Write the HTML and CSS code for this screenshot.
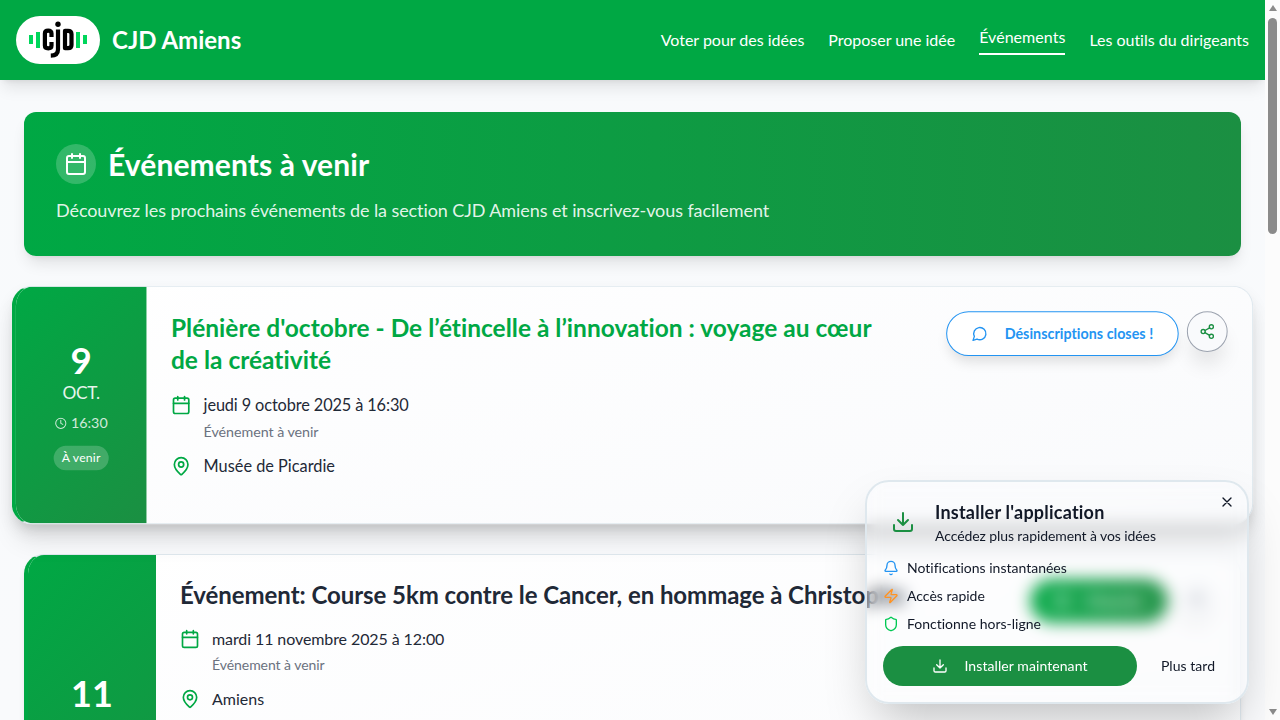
FILE: index.html
```html
<!DOCTYPE html>
<html lang="fr">
<head>
<meta charset="utf-8">
<title>CJD Amiens</title>
<link rel="stylesheet" href="styles.css">
</head>
<body>
<svg class="defs" width="0" height="0" aria-hidden="true">
  <symbol id="calendar" viewBox="0 0 24 24"><path d="M8 2v4M16 2v4M3 10h18"/><rect x="3" y="4" width="18" height="18" rx="2"/></symbol>
  <symbol id="pin" viewBox="0 0 24 24"><path d="M20 10c0 4.993-5.539 10.193-7.399 11.799a1 1 0 0 1-1.202 0C9.539 20.193 4 14.993 4 10a8 8 0 0 1 16 0"/><circle cx="12" cy="10" r="3"/></symbol>
  <symbol id="clock" viewBox="0 0 24 24"><circle cx="12" cy="12" r="10"/><path d="M12 6v6l4 2"/></symbol>
  <symbol id="share" viewBox="0 0 24 24"><circle cx="18" cy="5" r="3"/><circle cx="6" cy="12" r="3"/><circle cx="18" cy="19" r="3"/><path d="M8.59 13.51l6.83 3.98M15.41 6.51l-6.82 3.98"/></symbol>
  <symbol id="message" viewBox="0 0 24 24"><path d="M7.9 20A9 9 0 1 0 4 16.1L2 22Z"/></symbol>
  <symbol id="download" viewBox="0 0 24 24"><path d="M21 15v4a2 2 0 0 1-2 2H5a2 2 0 0 1-2-2v-4M7 10l5 5 5-5M12 15V3"/></symbol>
  <symbol id="bell" viewBox="0 0 24 24"><path d="M10.268 21a2 2 0 0 0 3.464 0M3.262 15.326A1 1 0 0 0 4 17h16a1 1 0 0 0 .74-1.673C19.41 13.956 18 12.499 18 8A6 6 0 0 0 6 8c0 4.499-1.411 5.956-2.738 7.326"/></symbol>
  <symbol id="zap" viewBox="0 0 24 24"><path d="M4 14a1 1 0 0 1-.78-1.63l9.9-10.2a.5.5 0 0 1 .86.46l-1.92 6.02A1 1 0 0 0 13 10h7a1 1 0 0 1 .78 1.63l-9.9 10.2a.5.5 0 0 1-.86-.46l1.92-6.02A1 1 0 0 0 11 14z"/></symbol>
  <symbol id="shield" viewBox="0 0 24 24"><path d="M20 13c0 5-3.5 7.5-7.66 8.95a1 1 0 0 1-.67-.01C7.5 20.5 4 18 4 13V6a1 1 0 0 1 1-1c2 0 4.5-1.2 6.24-2.72a1.17 1.17 0 0 1 1.52 0C14.51 3.81 17 5 19 5a1 1 0 0 1 1 1z"/></symbol>
  <symbol id="close" viewBox="0 0 24 24"><path d="M18 6 6 18M6 6l12 12"/></symbol>
</svg>
<div class="viewport">
  <div class="page">
    <header class="header">
      <div class="brand">
        <span class="logo">
          <svg width="60" height="38" viewBox="0 0 60 38">
            <g fill="#00d65b"><path d="M1 14h4v9H1zM8 11h4v16H8zM48 11h4v16h-4zM55 14h4v9h-4z"/></g>
            <g fill="none" stroke="#000" stroke-width="4.2"><path d="M23.500 16V12.500q0-2.800-3.300-2.800t-3.300 2.800v12q0 2.800 3.300 2.800t3.300-2.800V21M30 8.500v20q0 6-7.200 6.200"/><path d="M37 9.800v17.400h3q3.500 0 3.500-3.200V13q0-3.200-3.500-3.200z"/></g>
            <circle cx="30" cy="3.300" r="2.700" fill="#000"/>
          </svg>
        </span>
        <span class="brand-name">CJD Amiens</span>
      </div>
      <nav class="nav">
        <a>Voter pour des idées</a><a>Proposer une idée</a><a class="active">Événements</a><a>Les outils du dirigeants</a>
      </nav>
    </header>
    <main class="main">
      <section class="hero">
        <div class="hero-head">
          <span class="hero-icon"><svg class="i24"><use href="#calendar"/></svg></span>
          <h1>Événements à venir</h1>
        </div>
        <p>Découvrez les prochains événements de la section CJD Amiens et inscrivez-vous facilement</p>
      </section>
      <article class="card hovered">
        <div class="date">
          <div class="day">9</div>
          <div class="month">OCT.</div>
          <div class="time"><svg class="i12"><use href="#clock"/></svg>16:30</div>
          <span class="badge">À venir</span>
        </div>
        <div class="content">
          <div class="info">
            <h2>Plénière d'octobre - De l’étincelle à l’innovation : voyage au cœur de la créativité</h2>
            <div class="row"><svg class="i20"><use href="#calendar"/></svg><div><span class="when">jeudi 9 octobre 2025 à 16:30</span><small>Événement à venir</small></div></div>
            <div class="row"><svg class="i20"><use href="#pin"/></svg><div>Musée de Picardie</div></div>
          </div>
          <div class="actions">
            <span class="btn outline"><svg class="i16"><use href="#message"/></svg>Désinscriptions closes !</span>
            <span class="share"><svg class="i16"><use href="#share"/></svg></span>
          </div>
        </div>
      </article>
      <article class="card second">
        <div class="date">
          <div class="day">11</div>
        </div>
        <div class="content">
          <div class="info">
            <h2>Événement: Course 5km contre le Cancer, en hommage à Christophe</h2>
            <div class="row"><svg class="i20"><use href="#calendar"/></svg><div><span class="when">mardi 11 novembre 2025 à 12:00</span><small>Événement à venir</small></div></div>
            <div class="row"><svg class="i20"><use href="#pin"/></svg><div>Amiens</div></div>
          </div>
          <div class="actions">
            <span class="btn solid"><svg class="i16"><use href="#calendar"/></svg>S'inscrire</span>
            <span class="share"><svg class="i16"><use href="#share"/></svg></span>
          </div>
        </div>
      </article>
    </main>
  </div>
  <div class="scrollbar"><i class="arrow up"></i><i class="thumb"></i><i class="arrow down"></i></div>
</div>
<aside class="popup">
  <svg class="i16 close"><use href="#close"/></svg>
  <div class="popup-head">
    <span class="popup-icon"><svg class="i24"><use href="#download"/></svg></span>
    <div><h3>Installer l'application</h3><p>Accédez plus rapidement à vos idées</p></div>
  </div>
  <ul>
    <li><svg class="i16 blue"><use href="#bell"/></svg>Notifications instantanées</li>
    <li><svg class="i16 orange"><use href="#zap"/></svg>Accès rapide</li>
    <li><svg class="i16 green"><use href="#shield"/></svg>Fonctionne hors-ligne</li>
  </ul>
  <div class="popup-actions">
    <span class="install"><svg class="i16"><use href="#download"/></svg>Installer maintenant</span>
    <span class="later">Plus tard</span>
  </div>
</aside>
</body>
</html>
```
FILE: styles.css
```css
* { box-sizing: border-box; margin: 0; padding: 0; }
body { font: 16px/24px Lato, sans-serif; font-variant-ligatures: none; color: #1f2937; width: 1280px; height: 720px; overflow: hidden; }
svg { fill: none; stroke: currentColor; stroke-width: 2; stroke-linecap: round; stroke-linejoin: round; flex: none; }
.defs { position: absolute; }
.i12 { width: 12px; height: 12px; }
.i16 { width: 16px; height: 16px; }
.i20 { width: 20px; height: 20px; }
.i24 { width: 24px; height: 24px; }
.viewport { display: flex; height: 720px; }
.page { width: 1265px; height: 720px; overflow: hidden; background: linear-gradient(#f8fafc, #f9fafc); }
.header { height: 80px; padding: 0 16px; background: #00a844; color: #fff; display: flex; align-items: center; justify-content: space-between; box-shadow: 0 10px 15px -3px rgba(0,0,0,.1), 0 4px 6px -4px rgba(0,0,0,.1); }
.brand { display: flex; align-items: center; gap: 12px; }
.logo { width: 84px; height: 48px; border-radius: 24px; background: #fff; display: flex; align-items: center; justify-content: center; }
.logo svg { stroke: none; stroke-linecap: butt; }
.brand-name { font-size: 24px; line-height: 32px; font-weight: 700; }
.nav { display: flex; align-items: center; gap: 24px; letter-spacing: -.015px; }
.nav .active { border-bottom: 2px solid #fff; padding-bottom: 4px; letter-spacing: .04px; }
.main { padding: 32px 24px; }
.hero { height: 144px; padding: 32px; border-radius: 12px; color: #fff; background: linear-gradient(90deg, #00a844, #1b8f42); box-shadow: 0 10px 15px -3px rgba(0,0,0,.1), 0 4px 6px -4px rgba(0,0,0,.1); margin-bottom: 32px; }
.hero-head { display: flex; align-items: center; gap: 12px; margin-bottom: 12px; }
.hero-icon { width: 40px; height: 40px; border-radius: 50%; background: rgba(255,255,255,.2); display: flex; align-items: center; justify-content: center; }
.hero h1 { font-size: 30px; line-height: 36px; font-weight: 700; letter-spacing: .1px; }
.hero p { font-size: 18px; line-height: 28px; color: rgba(255,255,255,.9); letter-spacing: -.085px; }
.card { display: flex; overflow: hidden; border: 1px solid #dfe8ee; border-left: 4px solid #00a844; border-radius: 20px; background: linear-gradient(165deg, #fff, #f9fafc); box-shadow: 0 4px 6px -1px rgba(0,0,0,.1); }
.hovered { height: 234px; transform: scale(1.02); box-shadow: 0 20px 25px -5px rgba(0,0,0,.1), 0 8px 10px -6px rgba(0,0,0,.1), 0 8px 16px rgba(0,0,0,.07); margin-bottom: 32px; }
.second { height: 366px; }
.date { width: 128px; flex: none; background: linear-gradient(135deg, #00a844, #1b8f42); color: #fff; display: flex; flex-direction: column; align-items: center; justify-content: center; }
.second .date { padding-bottom: 88px; }
.day { font-size: 36px; line-height: 40px; font-weight: 700; }
.month { font-size: 17px; line-height: 24px; opacity: .9; margin-bottom: 8px; letter-spacing: -.3px; }
.time { font-size: 14px; line-height: 20px; opacity: .8; display: flex; align-items: center; gap: 4px; margin-bottom: 12px; }
.badge { font-size: 12px; line-height: 16px; padding: 4px 8px; border-radius: 12px; background: rgba(255,255,255,.2); letter-spacing: .2px; }
.content { flex: 1; display: flex; justify-content: space-between; gap: 24px; padding: 24px; }
.info { width: 704px; }
.info h2 { font-size: 24px; line-height: 32px; font-weight: 700; margin-bottom: 16px; letter-spacing: -.06px; }
.second h2 { white-space: nowrap; }
.hovered h2 { color: #00a844; letter-spacing: .015px; }
.row { display: flex; gap: 12px; margin-bottom: 12px; }
.row svg { color: #00a844; margin-top: 2px; }
.row small { display: block; font-size: 14px; line-height: 20px; color: #6b7280; margin-top: 4px; letter-spacing: -.05px; }
.when { letter-spacing: -.12px; }
.second .when { letter-spacing: -.09px; }
.actions { display: flex; gap: 8px; align-items: flex-start; }
.btn { height: 44px; padding: 0 24px; border-radius: 22px; display: flex; align-items: center; gap: 16px; font-size: 14px; font-weight: 700; }
.outline { border: 1px solid #2394f2; color: #2394f2; background: #fff; box-shadow: 0 8px 12px -3px rgba(0,0,0,.13); letter-spacing: .035px; }
.solid { background: linear-gradient(90deg, #00a844, #1b8f42); color: #fff; width: 138px; }
.share { width: 40px; height: 40px; border: 1px solid #9ca3af; border-radius: 20px; display: flex; align-items: center; justify-content: center; color: #1b8f42; box-shadow: 0 16px 20px -4px rgba(0,0,0,.1); background: #f9fafc; }
.second .share { border-color: #e0e3e8; color: #9ca3af; box-shadow: 0 10px 15px -3px rgba(0,0,0,.05); }
.scrollbar { width: 15px; background: #fcfcfc; display: flex; flex-direction: column; align-items: center; padding: 5px 0; }
.arrow { border: 4.5px solid transparent; }
.up { border-top: 0; border-bottom: 6px solid #8b8b8b; margin-bottom: 7px; }
.down { border-bottom: 0; border-top: 6px solid #8b8b8b; margin-top: auto; }
.thumb { width: 9px; height: 216px; border-radius: 5px; background: #8b8b8b; }
.popup { position: absolute; left: 865px; top: 480px; width: 384px; height: 224px; padding: 16px; border: 2px solid #dfe8ee; border-radius: 24px; background: rgba(250,251,253,.05); backdrop-filter: blur(8px); box-shadow: 0 25px 50px -12px rgba(0,0,0,.25); color: #111827; font-size: 14px; line-height: 20px; }
.close { position: absolute; right: 12px; top: 12px; }
.popup-head { display: flex; gap: 12px; align-items: center; margin-bottom: 12px; }
.popup-icon { width: 40px; height: 40px; color: #1b8f42; display: flex; align-items: center; justify-content: center; }
.popup h3 { font-size: 18px; line-height: 28px; font-weight: 700; letter-spacing: .22px; }
.popup p { letter-spacing: -.09px; }
.popup ul { list-style: none; display: flex; flex-direction: column; gap: 8px; margin-bottom: 12px; }
.popup li { display: flex; align-items: center; gap: 8px; }
.blue { color: #2394f2; } .orange { color: #ff9322; } .green { color: #00c853; }
.popup-actions { display: flex; gap: 8px; }
.install { width: 254px; height: 40px; border-radius: 20px; background: #1b8f42; color: #fff; display: flex; align-items: center; justify-content: center; gap: 16px; letter-spacing: .08px; }
.later { flex: 1; display: flex; align-items: center; justify-content: center; letter-spacing: .05px; }
```
